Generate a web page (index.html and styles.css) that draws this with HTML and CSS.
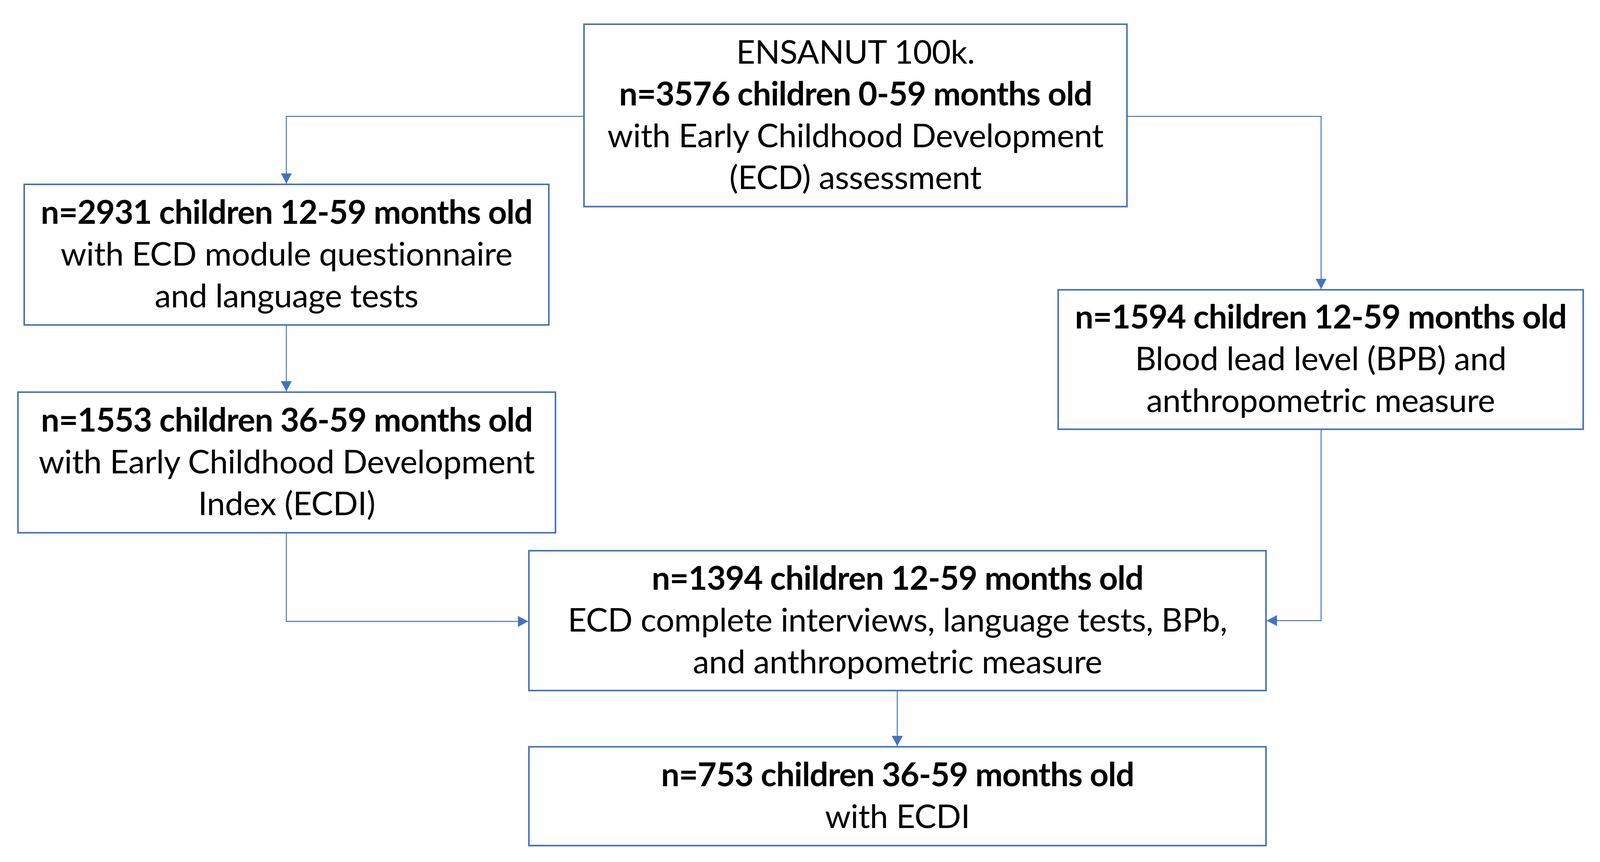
FILE: index.html
```html
<!DOCTYPE html>
<html lang="en">
<head>
<meta charset="utf-8">
<title>ENSANUT 100k flow chart</title>
<link rel="stylesheet" href="styles.css">
</head>
<body>
<div class="canvas">
  <svg class="links" width="4099" height="2207" viewBox="0 0 4099 2207" xmlns="http://www.w3.org/2000/svg">
    <defs>
      <marker id="arrow" markerUnits="userSpaceOnUse" markerWidth="28" markerHeight="28" refX="26" refY="14" orient="auto">
        <path d="M0,0 L26,14 L0,28 Z" fill="#4472C4"/>
      </marker>
    </defs>
    <polyline class="link" points="1493,298 733,298 733,470" marker-end="url(#arrow)"/>
    <polyline class="link" points="2887,298 3382,298 3382,740" marker-end="url(#arrow)"/>
    <polyline class="link" points="733,834 733,1002" marker-end="url(#arrow)"/>
    <polyline class="link" points="733,1366 733,1591 1352,1591" marker-end="url(#arrow)"/>
    <polyline class="link" points="3382,1101 3382,1589 3243,1589" marker-end="url(#arrow)"/>
    <polyline class="link" points="2297,1770 2297,1910" marker-end="url(#arrow)"/>
  </svg>

  <div class="node node-top">
    <span class="line">ENSANUT 100k.</span>
    <span class="line strong">n=3576 children 0-59 months old</span>
    <span class="line">with Early Childhood Development</span>
    <span class="line">(ECD) assessment</span>
  </div>

  <div class="node node-left1">
    <span class="line strong">n=2931 children 12-59 months old</span>
    <span class="line">with ECD module questionnaire</span>
    <span class="line">and language tests</span>
  </div>

  <div class="node node-left2">
    <span class="line strong">n=1553 children 36-59 months old</span>
    <span class="line">with Early Childhood Development</span>
    <span class="line">Index (ECDI)</span>
  </div>

  <div class="node node-right">
    <span class="line strong">n=1594 children 12-59 months old</span>
    <span class="line">Blood lead level (BPB) and</span>
    <span class="line">anthropometric measure</span>
  </div>

  <div class="node node-mid">
    <span class="line strong">n=1394 children 12-59 months old</span>
    <span class="line">ECD complete interviews, language tests, BPb,</span>
    <span class="line">and anthropometric measure</span>
  </div>

  <div class="node node-bottom">
    <span class="line strong">n=753 children 36-59 months old</span>
    <span class="line">with ECDI</span>
  </div>
</div>
</body>
</html>
```

FILE: styles.css
```css
html, body {
  margin: 0;
  padding: 0;
  background: #ffffff;
}

.canvas {
  position: relative;
  width: 4099px;
  height: 2207px;
  overflow: hidden;
  background: #ffffff;
  font-family: "Lato", "Noto Sans", sans-serif;
  color: #000000;
}

.links {
  position: absolute;
  left: 0;
  top: 0;
}

.link {
  fill: none;
  stroke: #4472C4;
  stroke-width: 2.5;
}

.node {
  position: absolute;
  box-sizing: border-box;
  border: 4px solid #4472C4;
  background: #ffffff;
  display: flex;
  flex-direction: column;
  align-items: center;
  justify-content: center;
  padding-bottom: 10px;
  text-align: center;
  font-size: 84px;
  line-height: 107px;
  letter-spacing: -0.5px;
  white-space: nowrap;
}

.line {
  display: block;
}

.strong {
  font-weight: 700;
  letter-spacing: -1.2px;
}

.node-top    { left: 1493px; top: 60px;   width: 1394px; height: 471px; }
.node-left1  { left: 60px;   top: 470px;  width: 1347px; height: 364px; }
.node-left2  { left: 44px;   top: 1002px; width: 1380px; height: 364px; }
.node-right  { left: 2707px; top: 740px;  width: 1348px; height: 361px; }
.node-mid    { left: 1352px; top: 1408px; width: 1891px; height: 362px; }
.node-bottom { left: 1352px; top: 1910px; width: 1891px; height: 257px; }
```
